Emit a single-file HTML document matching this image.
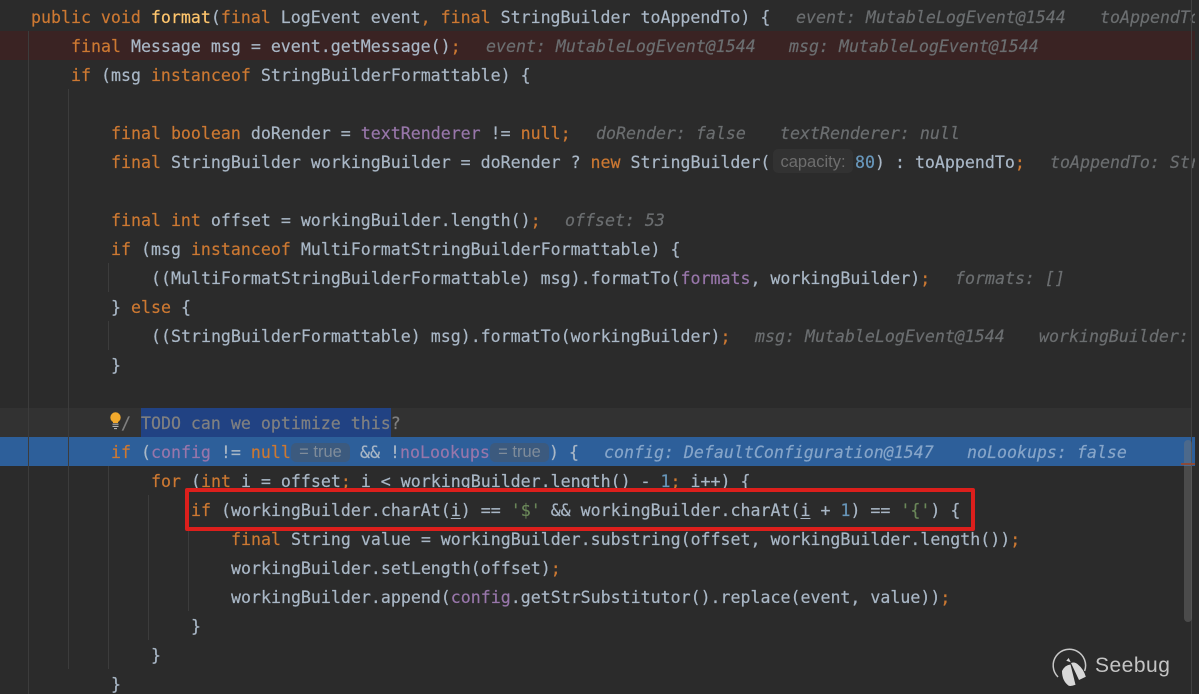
<!DOCTYPE html>
<html><head><meta charset="utf-8"><style>
html,body{margin:0;padding:0;background:#2b2b2b}
#p{position:relative;width:1199px;height:694px;overflow:hidden;background:#2b2b2b;font-family:"DejaVu Sans Mono","Liberation Mono",monospace;font-size:16.6px;color:#a9b7c6;-webkit-text-stroke:.2px}
.l{position:absolute;white-space:pre;height:29px;line-height:29px}
.k{color:#cc7832}.m{color:#ffc66d}.f{color:#9876aa}.n{color:#6897bb}.s{color:#6a8759}
.h{position:absolute;white-space:pre;height:29px;line-height:29px;font-style:italic;color:#6b6e70}
.b{position:absolute}
.g{position:absolute;width:1px;background:#3c3c3c}
.pl{position:absolute;text-align:center;font-family:"Liberation Sans",sans-serif;-webkit-text-stroke:0;border-radius:5px}
.t{top:443px;width:59px;height:19px;line-height:19px;background:#3c5a7e;color:#7f8c9a;font-size:16.5px}
u{text-decoration:underline;text-underline-offset:2px}
</style></head><body><div id="p">
<div class="b" style="left:0;top:31px;width:1195px;height:29px;background:#3a2323"></div>
<div class="b" style="left:0;top:408px;width:1192px;height:29px;background:#323232"></div>
<div class="b" style="left:141px;top:408px;width:250px;height:29px;background:#214283"></div>
<div class="b" style="left:0;top:437px;width:1195px;height:29px;background:#2d5f9a"></div>
<div class="g" style="left:28px;top:31px;height:663px"></div>
<div class="g" style="left:68px;top:89px;height:580px"></div>
<div class="g" style="left:108px;top:263px;height:29px"></div>
<div class="g" style="left:108px;top:321px;height:29px"></div>
<div class="g" style="left:108px;top:466px;height:203px"></div>
<div class="g" style="left:148px;top:495px;height:145px"></div>
<div class="g" style="left:188px;top:524px;height:87px"></div>

<div class="l" style="left:31px;top:3px"><span class="k">public void </span><span class="m">format</span>(<span class="k">final </span>LogEvent event<span class="k">, final </span>StringBuilder toAppendTo) {</div>
<div class="h" style="left:796px;top:3px">event: MutableLogEvent@1544</div>
<div class="h" style="left:1100px;top:3px">toAppendTo</div>

<div class="l" style="left:71px;top:32px"><span class="k">final </span>Message msg = event.getMessage()<span class="k">;</span></div>
<div class="h" style="left:486px;top:32px">event: MutableLogEvent@1544</div>
<div class="h" style="left:789px;top:32px">msg: MutableLogEvent@1544</div>

<div class="l" style="left:71px;top:61px"><span class="k">if </span>(msg <span class="k">instanceof </span>StringBuilderFormattable) {</div>

<div class="l" style="left:111px;top:119px"><span class="k">final boolean </span>doRender = <span class="f">textRenderer</span> != <span class="k">null;</span></div>
<div class="h" style="left:596px;top:119px">doRender: false</div>
<div class="h" style="left:780px;top:119px">textRenderer: null</div>

<div class="l" style="left:111px;top:148px"><span class="k">final </span>StringBuilder workingBuilder = doRender ? <span class="k">new </span>StringBuilder(</div>
<div class="pl" style="left:773px;top:149px;width:80px;height:24px;line-height:26px;background:#323232;color:#6e6e6e;font-size:16.5px">capacity:</div>
<div class="l" style="left:855px;top:148px"><span class="n">80</span>) : toAppendTo<span class="k">;</span></div>
<div class="h" style="left:1050px;top:148px">toAppendTo: Str</div>

<div class="l" style="left:111px;top:206px"><span class="k">final int </span>offset = workingBuilder.length()<span class="k">;</span></div>
<div class="h" style="left:565px;top:206px">offset: 53</div>

<div class="l" style="left:111px;top:235px"><span class="k">if </span>(msg <span class="k">instanceof </span>MultiFormatStringBuilderFormattable) {</div>
<div class="l" style="left:151px;top:264px">((MultiFormatStringBuilderFormattable) msg).formatTo(<span class="f">formats</span>, workingBuilder)<span class="k">;</span></div>
<div class="h" style="left:955px;top:264px">formats: []</div>
<div class="l" style="left:111px;top:293px">} <span class="k">else </span>{</div>
<div class="l" style="left:151px;top:322px">((StringBuilderFormattable) msg).formatTo(workingBuilder)<span class="k">;</span></div>
<div class="h" style="left:755px;top:322px">msg: MutableLogEvent@1544</div>
<div class="h" style="left:1039px;top:322px">workingBuilder:</div>
<div class="l" style="left:111px;top:351px">}</div>

<div class="l" style="left:121px;top:409px;color:#808080">/ TODO can we optimize this?</div>
<svg class="b" style="left:108px;top:411px" width="16" height="21" viewBox="0 0 16 21"><circle cx="7.5" cy="6.5" r="5.2" fill="#f2a92c"/><rect x="5" y="9" width="5" height="3" fill="#f2a92c"/><path d="M4.5 13.2h6M4.5 15.4h6M6 17.6h3" stroke="#b0b0b0" stroke-width="1.1" fill="none"/></svg>

<div class="l" style="left:111px;top:438px"><span class="k">if </span>(<span class="f">config</span> != <span class="k">null</span></div>
<div class="pl t" style="left:291px">= true</div>
<div class="l" style="left:360px;top:438px">&amp;&amp; !<span class="f">noLookups</span></div>
<div class="pl t" style="left:490px">= true</div>
<div class="l" style="left:549px;top:438px">) {</div>
<div class="h" style="left:604px;top:438px;color:#86a5c9">config: DefaultConfiguration@1547</div>
<div class="h" style="left:967px;top:438px;color:#86a5c9">noLookups: false</div>

<div class="l" style="left:151px;top:467px"><span class="k">for </span>(<span class="k">int </span>i = offset<span class="k">; </span>i &lt; workingBuilder.length() - <span class="n">1</span><span class="k">; </span>i++) {</div>
<div class="l" style="left:191px;top:496px"><span class="k">if </span>(workingBuilder.charAt(<u>i</u>) == <span class="s">'$'</span> &amp;&amp; workingBuilder.charAt(<u>i</u> + <span class="n">1</span>) == <span class="s">'{'</span>) {</div>
<div class="l" style="left:231px;top:525px"><span class="k">final </span>String value = workingBuilder.substring(offset, workingBuilder.length())<span class="k">;</span></div>
<div class="l" style="left:231px;top:554px">workingBuilder.setLength(offset)<span class="k">;</span></div>
<div class="l" style="left:231px;top:583px">workingBuilder.append(<span class="f">config</span>.getStrSubstitutor().replace(event, value))<span class="k">;</span></div>
<div class="l" style="left:191px;top:612px">}</div>
<div class="l" style="left:151px;top:641px">}</div>
<div class="l" style="left:111px;top:670px">}</div>

<div class="b" style="left:185px;top:488px;width:782px;height:35px;border:4px solid #dc1f1c;border-radius:2px"></div>

<div class="b" style="left:1195px;top:0;width:4px;height:694px;background:#2b2b2b"></div>
<div class="g" style="left:1191px;top:0;height:694px;background:#414141"></div>
<div class="b" style="left:1184px;top:440px;width:8px;height:182px;background:rgba(120,120,120,.42);border-radius:4px"></div>
<div class="b" style="left:1181px;top:463px;width:14px;height:2px;background:#8a4a3a"></div>

<svg class="b" style="left:0;top:0;-webkit-text-stroke:0" width="1199" height="694" viewBox="0 0 1199 694">
<path d="M1058 677A16.2 16.2 0 1 1 1084.6 671" fill="none" stroke="#c8c8c8" stroke-width="1.5"/>
<path d="M1062 671Q1065 665 1070.5 664.5L1075.5 684.7Q1071 686.5 1068.7 685.7Q1062 681 1062 671Z" fill="#d8d8d8"/>
<path d="M1071 663Q1075 661.5 1078.5 665Q1083.5 669 1085.8 676.7L1079 680Z" fill="#d8d8d8"/>
<path d="M1066.3 660.7L1068.7 658L1070.7 662.3Z" fill="#d8d8d8"/>
<text x="1095" y="672" font-family="Liberation Sans, sans-serif" font-size="21" letter-spacing=".5" fill="#c4c4c4">Seebug</text>
</svg>
</div></body></html>
